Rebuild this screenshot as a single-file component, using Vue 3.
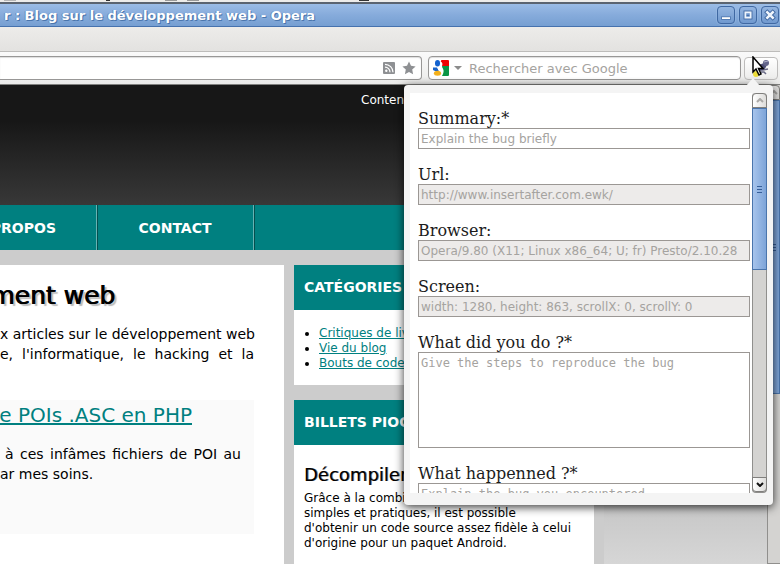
<script setup>
import { ref } from 'vue'

const fields = [
  { id: 'summary', label: 'Summary:*', placeholder: 'Explain the bug briefly' },
  { id: 'url', label: 'Url:', value: 'http://www.insertafter.com.ewk/' },
  { id: 'browser', label: 'Browser:', value: 'Opera/9.80 (X11; Linux x86_64; U; fr) Presto/2.10.28' },
  { id: 'screen', label: 'Screen:', value: 'width: 1280, height: 863, scrollX: 0, scrollY: 0' },
  { id: 'steps', label: 'What did you do ?*', placeholder: 'Give the steps to reproduce the bug', long: true },
  { id: 'result', label: 'What happenned ?*', placeholder: 'Explain the bug you encountered', long: true }
]
const categories = ['Critiques de livres', 'Vie du blog', 'Bouts de code']
const address = ref('')
const query = ref('')
</script>

<template>
  <div class="window">
    <div class="desktop-strip">
      <i class="smudge"></i><i class="smudge dark"></i><i class="smudge round"></i><i class="smudge round"></i><i class="smudge dark far"></i>
    </div>
    <header class="titlebar">
      <div class="title">r : Blog sur le développement web - Opera</div>
      <div class="controls">
        <button aria-label="Minimize">
          <svg viewBox="0 0 18 18"><rect x="4" y="11" width="10" height="3" fill="#fff" stroke="#4a74ad" /></svg>
        </button>
        <button aria-label="Maximize">
          <svg viewBox="0 0 18 18"><rect x="6" y="6" width="6" height="6" fill="none" stroke="#3f68a2" stroke-width="4" /><rect x="6" y="6" width="6" height="6" fill="#6d96cd" stroke="#eef4fc" stroke-width="2" /><path d="M7.500 9.500h3" stroke="#3f68a2" /></svg>
        </button>
        <button aria-label="Close">
          <svg viewBox="0 0 18 18"><path d="M6 6l6 6M12 6l-6 6" stroke="#3f68a2" stroke-width="5" stroke-linecap="square" /><path d="M6 6l6 6M12 6l-6 6" stroke="#eef4fc" stroke-width="3" stroke-linecap="square" /></svg>
        </button>
      </div>
    </header>
    <div class="menubar"></div>
    <div class="toolbar">
      <div class="box address">
        <input v-model="address" aria-label="Adresse">
        <svg class="rss" viewBox="0 0 12 12"><rect width="12" height="12" rx="1" fill="#8e9093" /><circle cx="3.300" cy="8.800" r="1.200" fill="#fff" /><path d="M2 5.200a5 5 0 0 1 5 5M2 2.300a8 8 0 0 1 8 8" fill="none" stroke="#fff" stroke-width="1.200" /></svg>
        <svg class="star" viewBox="0 0 14 14"><path d="M7 .5l2 4.300 4.600.6-3.400 3.200.9 4.700L7 11l-4.100 2.300.9-4.700L.4 5.400 5 4.800z" fill="#8e9093" /></svg>
      </div>
      <div class="box search">
        <svg class="google" viewBox="0 0 16 16">
          <path d="M7 0h8a1 1 0 0 1 1 1v5H9z" fill="#f00000" />
          <path d="M9 6h7v9a1 1 0 0 1-1 1H8l2-5z" fill="#0a9545" />
          <path d="M0 7.500h4l2 3.500H2L0 10z" fill="#1b64c8" />
          <path d="M6.500 0h2l-1 1.500c2.500 1 2.500 4 .5 5.500 3 2 3.500 4.500 1 9H7c2-3.500-2-4.500-2.500-8.500L7 5z" fill="#fff" />
          <ellipse cx="4.500" cy="3.300" rx="2.500" ry="3.300" fill="#1262cf" />
          <ellipse cx="4.500" cy="13.200" rx="3.600" ry="2.500" fill="#f3b01c" />
        </svg>
        <svg class="caret" viewBox="0 0 8 4"><path d="M0 0h8L4 4z" fill="#8c8c8c" /></svg>
        <input v-model="query" placeholder="Rechercher avec Google" aria-label="Rechercher avec Google">
      </div>
      <button class="extension" aria-label="Bug report">
        <svg class="bug" viewBox="0 0 22 20">
          <path d="M10 7l4 1 2-4M11 11l3 1 5-1M12 14h3l2 2" fill="none" stroke="#686985" stroke-width="1.500" />
          <ellipse cx="13" cy="9" rx="5" ry="3" transform="rotate(-35 13 9)" fill="#4b4d75" />
          <circle cx="17" cy="5" r="3" fill="#63658b" /><path d="M15 4l4-1" stroke="#b2b3cb" />
          <circle cx="7" cy="16" r="3" fill="#eadb39" />
        </svg>
        <svg class="pointer" viewBox="0 0 12 20"><path d="M1 1v15l3-3 3 6 2-1-2.500-5.500H11z" fill="#fff" stroke="#000" stroke-width="1.500" /></svg>
      </button>
    </div>

    <div class="viewport">
      <div class="site">
        <div class="banner"><span>Contenu</span></div>
        <nav>
          <a href="#" class="about">PROPOS</a>
          <a href="#" class="contact">CONTACT</a>
        </nav>
        <div class="columns">
          <main>
            <h1>ment web</h1>
            <p class="intro"><span>x articles sur le développement web</span><span>e, l'informatique, le hacking et la</span></p>
            <article>
              <h2><a href="#">e POIs .ASC en PHP</a></h2>
              <p><span class="full">à ces infâmes fichiers de POI au</span>ar mes soins.</p>
            </article>
          </main>
          <aside>
            <section>
              <h3>CATÉGORIES</h3>
              <ul>
                <li v-for="c in categories" :key="c"><a href="#">{{ c }}</a></li>
              </ul>
            </section>
            <section class="picks">
              <h3>BILLETS PIOCHÉS</h3>
              <div class="post">
                <h4>Décompiler</h4>
                <p>Grâce à la combinaison d'outils<br>simples et pratiques, il est possible<br>d'obtenir un code source assez fidèle à celui<br>d'origine pour un paquet Android.</p>
              </div>
            </section>
          </aside>
          <div class="backdrop"></div>
        </div>
      </div>
      <div class="scrollbar page-bar">
        <div class="arrow"><svg viewBox="0 0 8 5"><path d="M1 4l3-3 3 3" /></svg></div>
        <div class="thumb"><i></i></div>
      </div>

      <div class="popup">
        <form class="fields" @submit.prevent>
          <div v-for="f in fields" :key="f.id" class="field">
            <label :for="f.id">{{ f.label }}</label>
            <textarea v-if="f.long" :id="f.id" :placeholder="f.placeholder"></textarea>
            <input v-else-if="f.value" :id="f.id" :value="f.value" disabled>
            <input v-else :id="f.id" :placeholder="f.placeholder">
          </div>
        </form>
        <div class="scrollbar">
          <div class="arrow"><svg viewBox="0 0 8 5"><path d="M1 4l3-3 3 3" /></svg></div>
          <div class="thumb"><i></i></div>
          <div class="arrow down"><svg viewBox="0 0 8 5"><path d="M1 1l3 3 3-3" /></svg></div>
        </div>
      </div>
    </div>
  </div>
</template>

<style>
body { overflow: hidden; }
</style>

<style scoped>
* { box-sizing: border-box; margin: 0; }
.window {
  height: 100vh;
  display: flex;
  flex-direction: column;
  overflow: hidden;
  font-family: "DejaVu Sans", sans-serif;
  font-size: 12px;
  color: #000;
}
button, input, textarea { font: inherit; padding: 0; outline: none; }
.desktop-strip {
  flex: none;
  height: 4px;
  display: flex;
  gap: 0 10px;
  padding-left: 4px;
  background: #edecea;
  border-bottom: 2px solid #5b6470;
  overflow: hidden;
}
.smudge { width: 12px; height: 1px; background: #b5b5b5; }
.smudge.dark { width: 4px; background: #333; margin-left: 80px; }
.smudge.round { background: #999; margin-left: 45px; }
.smudge.round + .round { margin-left: 0; }
.smudge.dark.far { width: 10px; margin-left: 150px; }
.titlebar {
  flex: none;
  height: 23px;
  display: flex;
  align-items: center;
  justify-content: space-between;
  background: linear-gradient(#9bbce6, #86abdb 50%, #769fd2);
  border-bottom: 1px solid #4672ae;
}
.title {
  width: 315px;
  display: flex;
  justify-content: flex-end;
  white-space: nowrap;
  font-size: 13px;
  font-weight: bold;
  color: #fff;
  text-shadow: 1px 1px 0 #4a75ac, -1px 0 0 #5f8bc2;
}
.controls { display: flex; gap: 4px; padding-right: 1px; }
.controls button {
  width: 18px;
  height: 18px;
  border: 1px solid #3f68a2;
  border-radius: 4px;
  background: linear-gradient(#94b5e0, #7099cf);
  box-shadow: 0 0 0 1px #a8c5ea55;
}
.controls svg { display: block; width: 16px; height: 16px; }
.menubar { flex: none; height: 25px; background: linear-gradient(#edecea, #e3e2e0); border-bottom: 1px solid #bdbcba; }
.toolbar {
  flex: none;
  height: 33px;
  display: flex;
  align-items: center;
  padding: 0 2px 0 0;
  background: linear-gradient(#fafafa, #ebebea);
  border-bottom: 1px solid #80807e;
}
.box {
  height: 24px;
  display: flex;
  align-items: center;
  background: #fff;
  border: 1px solid #989796;
  border-radius: 4px;
  box-shadow: inset 0 1px 1px #ddd;
}
.box input { flex: 1; min-width: 0; border: 0; background: none; font-size: 13px; }
.address { flex: 1; border-left: 0; border-radius: 0 4px 4px 0; padding-right: 5px; gap: 7px; margin-right: 6px; }
.rss { width: 12px; height: 12px; }
.star { width: 14px; height: 14px; }
.search { width: 313px; padding: 0 4px; margin-right: 3px; }
.google { width: 16px; height: 16px; }
.caret { width: 8px; height: 4px; margin: 0 7px 0 5px; }
.extension {
  position: relative;
  width: 34px;
  height: 23px;
  border: 1px solid #bdbcbb;
  border-radius: 4px;
  background: linear-gradient(#fff, #ececeb);
}
.bug { position: absolute; left: 4px; top: 0; width: 22px; height: 20px; }
.pointer { position: absolute; left: 7px; top: -2px; width: 12px; height: 20px; }
input::placeholder, textarea::placeholder { color: #a5a3a0; opacity: 1; }

.viewport { flex: 1; min-height: 0; position: relative; display: flex; background: #ccc; }
.site { flex: 1; min-width: 0; display: flex; flex-direction: column; overflow: hidden; }
.banner {
  flex: none;
  height: 120px;
  padding: 8px 0 0 361px;
  color: #fff;
  background: linear-gradient(#171717 30%, #383838);
}
nav { flex: none; height: 45px; display: flex; background: #008080; }
nav a {
  display: flex;
  align-items: center;
  justify-content: center;
  font-size: 14px;
  font-weight: bold;
  color: #fff;
  text-decoration: none;
  border-right: 1px solid #66b3b3;
  box-shadow: 1px 0 0 #034f4f;
}
.about { width: 97px; justify-content: flex-end; padding-right: 40px; white-space: nowrap; }
.contact { width: 157px; }
.columns { flex: 1; min-height: 0; display: flex; }
main { flex: 1; min-width: 0; margin-top: 15px; padding: 15px 30px 0 0; background: #fff; }
h1 {
  width: 115px;
  display: flex;
  justify-content: flex-end;
  white-space: nowrap;
  font-size: 25px;
  font-weight: normal;
  line-height: 32px;
  text-shadow: 1px 0 0 #000, 3px 2px 1px #bbb;
}
main p { font-size: 14px; line-height: 20px; }
.intro { margin: 12px 0 36px; }
.intro span, .full { display: block; text-align: justify; text-align-last: justify; white-space: nowrap; }
.full { padding-left: 5px; }
article { height: 134px; padding: 1px 13px 0 0; background: #fafafa; }
h2 {
  width: 192px;
  display: flex;
  justify-content: flex-end;
  white-space: nowrap;
  font-size: 20px;
  font-weight: normal;
  line-height: 28px;
  margin-bottom: 15px;
}
a { color: #008080; }
aside { flex: none; width: 300px; margin: 15px 10px 0; display: flex; flex-direction: column; gap: 15px; }
section { background: #fff; }
.picks { flex: 1; }
h3 {
  height: 45px;
  padding-left: 10px;
  line-height: 45px;
  font-size: 14px;
  font-weight: bold;
  color: #fff;
  background: #008080;
}
ul { padding: 16px 0 14px 25px; line-height: 15px; }
h4 { font-size: 18px; font-weight: normal; line-height: 24px; margin-bottom: 4px; text-shadow: 1px 0 0 #00000088; }
.post { padding: 18px 8px 0 10px; line-height: 15px; }
.backdrop { flex: none; width: 163px; background: linear-gradient(#b8b8b8, #c6c6c6 80%, #d6d6d6); }

.scrollbar {
  flex: none;
  width: 15px;
  display: flex;
  flex-direction: column;
  background: #d4d3d1;
  border: 1px solid #908f8d;
  border-top: 0;
  border-radius: 4px;
}
.arrow {
  height: 15px;
  display: flex;
  align-items: center;
  justify-content: center;
  margin: 0 -1px;
  border: 1px solid #807f7d;
  border-radius: 4px 4px 0 0;
  background: linear-gradient(90deg, #fff, #dddcda);
}
.arrow svg { width: 8px; height: 5px; fill: none; stroke: #aaa9a7; stroke-width: 2; }
.arrow.down { margin-top: auto; border-radius: 0 0 4px 4px; }
.arrow.down svg { stroke: #111; }
.thumb {
  height: 162px;
  display: flex;
  align-items: center;
  justify-content: center;
  margin: 0 -1px;
  border: 1px solid #4a75ac;
  background: linear-gradient(90deg, #a7c4ec, #7da4d8);
}
.thumb i { width: 5px; height: 7px; border: solid #375f99; border-width: 1px 0; background: linear-gradient(#375f99, #375f99) center / 5px 1px no-repeat; }
.page-bar { width: 13px; border-radius: 0; border-right: 0; }
.page-bar .arrow, .page-bar .thumb { margin-right: 0; }
.page-bar .thumb { height: 294px; background: #7da4d8; }

.popup {
  position: absolute;
  top: 0;
  right: 7px;
  width: 369px;
  height: 420px;
  display: flex;
  padding: 8px 6px 12px;
  background: #f4f4f4;
  border-radius: 4px;
  box-shadow: 0 2px 10px #000000cc;
  clip-path: inset(-8px -20px -20px -20px);
}
.popup::before {
  content: "";
  position: absolute;
  top: -7px;
  right: 13px;
  width: 14px;
  height: 8px;
  background: #f4f4f4;
  clip-path: polygon(50% 0, 100% 100%, 0 100%);
}
.fields {
  flex: 1;
  min-width: 0;
  display: flex;
  flex-direction: column;
  gap: 16px;
  padding: 16px 2px 0 8px;
  background: #fff;
  overflow: hidden;
}
.field { flex: none; display: flex; flex-direction: column; }
label { font-family: "DejaVu Serif", serif; font-size: 16px; line-height: 19px; color: #1c1c1c; }
.field input, textarea { border: 1px solid #9b9794; border-radius: 0; background: #fff; padding: 0 2px; }
.field input { height: 21px; }
.field input:disabled { background: #edebea; color: #a5a3a0; }
textarea { height: 96px; resize: none; padding-top: 3px; font-family: "DejaVu Sans Mono", monospace; line-height: 15px; }
</style>
